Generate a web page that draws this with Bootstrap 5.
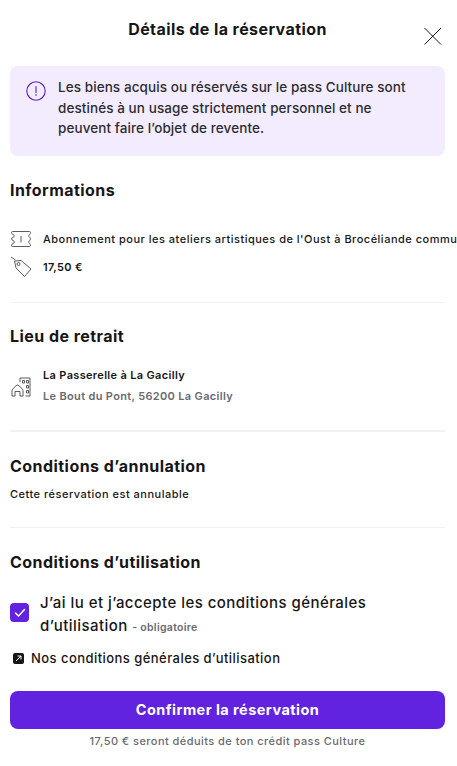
<!DOCTYPE html>
<html lang="fr">
<head>
<meta charset="utf-8">
<title>Détails de la réservation</title>
<link rel="stylesheet" href="https://cdn.jsdelivr.net/npm/bootstrap@5.3.0/dist/css/bootstrap.min.css">
<style>
html,body{height:100%;overflow:hidden}
body{font-family:Inter,"Liberation Sans",sans-serif;color:#161617;background:#fff}
.sheet{width:457px;height:766px;padding:0 12px 0 10px;overflow:hidden}
.head-bar{height:66px;position:relative}
.head-title{font-size:16px;font-weight:700;line-height:20px;padding-top:19px;text-align:center;letter-spacing:.42px}
.close-x{position:absolute;right:1px;top:25px;width:22px;height:22px}
.notice{background:#f3ecfe;border-radius:8px;height:90px;padding:11px 16px;gap:12px;color:#2c2c33}
.notice-text{font-size:13.5px;font-weight:500;line-height:20.5px;letter-spacing:.08px}
.notice svg{flex:none;margin-top:4px}
.sec-title{font-size:16px;font-weight:700;line-height:20px;margin:0;letter-spacing:.45px}
.info-row{font-size:11px;font-weight:500;white-space:nowrap;gap:11px;line-height:14px;letter-spacing:.33px}
.wide-text{letter-spacing:.5px}
.ico{width:22px;height:22px;flex:none}
.clip-row{margin-right:-12px;overflow:hidden}
.sep{height:1px;background:#f1f1f4;border:0;opacity:1;margin:0}
.sep-b{height:2px}
.grey{color:#696a6f}
.pick-box{width:19px;height:19px;border-radius:4px;background:#6123df;flex:none;margin-top:12px}
.agree{font-size:15px;font-weight:500;line-height:23px;letter-spacing:.45px}
.agree small{font-size:10.5px;font-weight:600;color:#696a6f;letter-spacing:.3px}
.ext-link{font-size:13px;font-weight:500;line-height:16px;gap:7px;color:#161617;text-decoration:none;letter-spacing:.45px}
.ext-ico{width:11px;height:11px;background:#161617;border-radius:2px;flex:none}
.go-btn{height:38px;border-radius:8px;background:#6123df;border:0;color:#fff;font-size:14.5px;font-weight:700;width:100%;letter-spacing:.45px}
.foot-note{font-size:11px;font-weight:500;color:#696a6f;text-align:center;line-height:14px;letter-spacing:.45px}
.pt-a{padding-top:24px}
</style>
</head>
<body>
<div class="sheet">
  <div class="head-bar">
    <div class="head-title">Détails de la réservation</div>
    <svg class="close-x" viewBox="0 0 22 22" fill="none" stroke="#161617" stroke-width="1"><path d="M2.500 3l16.500 16.500M19 3L2.500 19.500"/></svg>
  </div>

  <div class="notice d-flex">
    <svg width="20" height="20" viewBox="0 0 20 20" fill="none" stroke="#5b21c9" stroke-width="1.1"><circle cx="10" cy="10" r="9.2"/><path d="M10 5.500v6M10 13.600v.9" stroke-linecap="round"/></svg>
    <div class="notice-text">Les biens acquis ou réservés sur le pass Culture sont<br>destinés à un usage strictement personnel et ne<br>peuvent faire l’objet de revente.</div>
  </div>

  <h2 class="sec-title pt-a">Informations</h2>
  <div class="clip-row d-flex align-items-center info-row" style="margin-top:28px">
    <svg class="ico" viewBox="0 0 22 22" fill="none" stroke="#4a4a50" stroke-width=".9" stroke-linejoin="round"><path d="M2.500 3.500h17c.8 0 1 .6 1 1.200 0 1.800-1.800 2-1.800 3.300 0 1 1.800 1.500 1.800 3 0 1.400-1.800 1.800-1.800 3 0 1.200 1.800 1.400 1.800 3.300 0 .6-.2 1.200-1 1.200h-17c-.8 0-1-.6-1-1.200 0-1.900 3-2 3-3.300 0-1.200-3-1.600-3-3 0-1.500 3-2 3-3 0-1.300-3-1.500-3-3.300 0-.6.2-1.200 1-1.200z"/><path d="M11 8v6.500"/></svg>
    <span class="wide-text">Abonnement pour les ateliers artistiques de l'Oust à Brocéliande communauté</span>
  </div>
  <div class="d-flex align-items-center info-row" style="margin-top:6px">
    <svg class="ico" viewBox="0 0 22 22" fill="none" stroke="#4a4a50" stroke-width=".9" stroke-linejoin="round"><path d="M1 1l4.500 3M4.500 5l6.500-.5 10 8.500-6.500 7.500-8.500-8.500z"/><circle cx="8.500" cy="8" r="1.500"/></svg>
    <span class="fw-semibold">17,50 €</span>
  </div>
  <hr class="sep" style="margin-top:24px">

  <h2 class="sec-title" style="margin-top:23px">Lieu de retrait</h2>
  <div class="d-flex align-items-center info-row" style="margin-top:22px">
    <svg class="ico" viewBox="0 0 22 22" fill="none" stroke="#4a4a50" stroke-width=".9" stroke-linejoin="round"><g transform="translate(0 1.500)"><path d="M10 5.500V1.500h10v18h-4.500"/><path d="M2 19.500v-5.500c0-1 4-5.500 5.500-5.500s5.500 4.500 5.500 5.500v5.500h-3v-4.500H5v4.500z"/><path d="M12.500 4h2v2.500h-2zM16.500 4h2v2.500h-2zM16.500 9h2v2.500h-2zM16.500 14h2v2.500h-2z"/></g></svg>
    <div>
      <div class="fw-semibold">La Passerelle à La Gacilly</div>
      <div class="grey fw-semibold" style="margin-top:7px">Le Bout du Pont, 56200 La Gacilly</div>
    </div>
  </div>
  <hr class="sep sep-b" style="margin-top:27px">

  <h2 class="sec-title" style="margin-top:24px">Conditions d’annulation</h2>
  <div class="info-row wide-text" style="margin-top:11px">Cette réservation est annulable</div>
  <hr class="sep" style="margin-top:26px">

  <h2 class="sec-title" style="margin-top:24px">Conditions d’utilisation</h2>
  <div class="d-flex agree" style="margin-top:19px;gap:11px">
    <div class="pick-box d-flex align-items-center justify-content-center">
      <svg width="12" height="10" viewBox="0 0 12 10" fill="none" stroke="#fff" stroke-width="1.500" stroke-linecap="round" stroke-linejoin="round"><path d="M1.500 5l3 3 6-6.500"/></svg>
    </div>
    <div>J’ai lu et j’accepte les conditions générales d’utilisation <small>- obligatoire</small></div>
  </div>
  <a href="#" class="ext-link d-flex align-items-center" style="margin-top:11px;margin-left:3px">
    <span class="ext-ico d-flex align-items-center justify-content-center">
      <svg width="7" height="7" viewBox="0 0 7 7" fill="none" stroke="#fff" stroke-width="1"><path d="M1 6l5-5M2.500 1H6v3.500"/></svg>
    </span>
    Nos conditions générales d’utilisation
  </a>
  <button class="btn go-btn d-block" style="margin-top:25px">Confirmer la réservation</button>
  <div class="foot-note" style="margin-top:5px">17,50 € seront déduits de ton crédit pass Culture</div>
</div>
</body>
</html>
